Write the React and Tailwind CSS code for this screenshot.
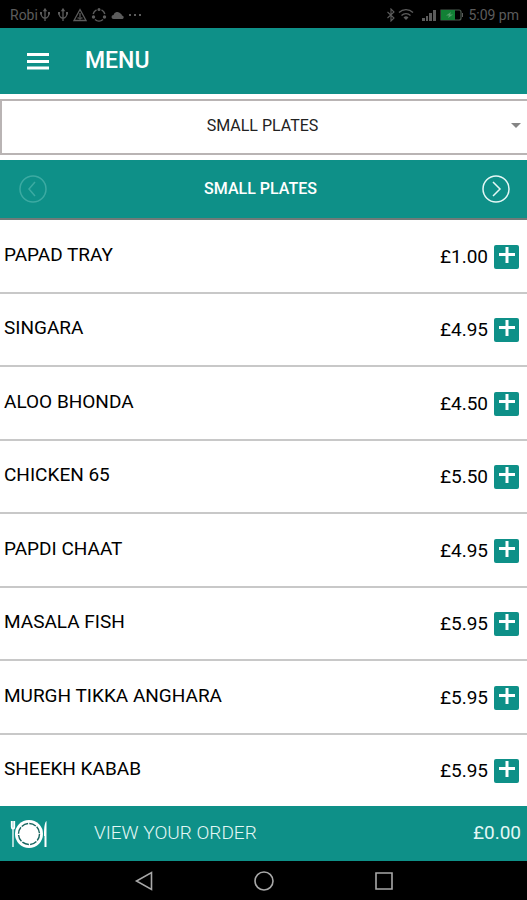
import React from "react";

const dishes = [
  { name: "PAPAD TRAY", price: "£1.00" },
  { name: "SINGARA", price: "£4.95" },
  { name: "ALOO BHONDA", price: "£4.50" },
  { name: "CHICKEN 65", price: "£5.50" },
  { name: "PAPDI CHAAT", price: "£4.95" },
  { name: "MASALA FISH", price: "£5.95" },
  { name: "MURGH TIKKA ANGHARA", price: "£5.95" },
  { name: "SHEEKH KABAB", price: "£5.95" },
];

function UsbIcon() {
  return (
    <svg className="h-3.5 w-3" viewBox="0 0 12 14" fill="none" stroke="currentColor" strokeWidth="1.3">
      <path d="M6 1v12M6 10.500C3 9.500 2 8.500 2 5M6 10.500c3-1 4-2 4-5.500" />
      <path d="M5 2.500 6 1l1 1.500z" fill="currentColor" />
      <path d="M1 4h2v2.500H1zM9 4h2v2.500H9z" fill="currentColor" stroke="none" />
    </svg>
  );
}

function StatusBar() {
  return (
    <div className="flex h-7 shrink-0 items-center justify-between bg-black pl-2.5 pr-2 pt-0.5 text-sm text-[#5c5c5c]">
      <div className="flex items-center">
        <span className="w-7">Robi</span>
        <span className="ml-px flex gap-1.5">
          <UsbIcon />
          <UsbIcon />
        </span>
        <svg className="ml-1 h-3.5 w-3.5" viewBox="0 0 14 14" fill="none" stroke="currentColor" strokeWidth="1.3">
          <path d="M7 1.500 13 12.500H1zM7 5v4M7 10v1.500" />
          <path d="M4.500 10h5" />
        </svg>
        <svg className="ml-1 h-4 w-4" viewBox="0 0 16 16" fill="none" stroke="currentColor" strokeWidth="1.4">
          <path d="M5.500 2.800A6 6 0 0 0 2.200 7M10.500 2.800A6 6 0 0 1 13.800 7M4 12.500a6 6 0 0 0 8 0" />
          <circle cx="8" cy="2.500" r="1.500" fill="currentColor" stroke="none" />
          <circle cx="2.500" cy="10" r="1.700" fill="currentColor" stroke="none" />
          <circle cx="13.500" cy="10" r="1.700" fill="currentColor" stroke="none" />
        </svg>
        <svg className="ml-1 h-3 w-3.5" viewBox="0 0 14 12" fill="currentColor">
          <path d="M2.500 10a2 2 0 0 1 0-4A4 4 0 0 1 9.500 4.500 3 3 0 0 1 11 6.500a1.800 1.800 0 0 1 .5 3.500z" />
        </svg>
        <svg className="ml-1 h-3 w-3" viewBox="0 0 12 12" fill="currentColor">
          <path d="M0 5h2v2H0zM5 5h2v2H5zM10 5h2v2h-2z" />
        </svg>
      </div>
      <div className="flex items-center">
        <svg className="h-3.5 w-2.5" viewBox="0 0 10 14" fill="none" stroke="currentColor" strokeWidth="1.100">
          <path d="m1.500 4 6.500 6-3 3V1l3 3-6.500 6" />
        </svg>
        <svg className="ml-0.5 h-3.5 w-4" viewBox="0 0 16 14" fill="none" stroke="currentColor" strokeWidth="1.300">
          <path d="M1 4.500a10 10 0 0 1 14 0M3.500 7.500a6.500 6.500 0 0 1 9 0" />
          <path d="M5.500 9.500a3.500 3.500 0 0 1 5 0L8 12z" fill="currentColor" stroke="none" />
        </svg>
        <svg className="ml-2 h-3.5 w-3.5" viewBox="0 0 14 14" fill="currentColor">
          <path d="M0 10h3v3H0zM4 8h2v5H4zM7 5h3v8H7zM11 2h3v11h-3z" />
        </svg>
        <svg className="ml-1 h-3 w-6" viewBox="0 0 24 12">
          <path d="M1 1h18a2 2 0 0 1 2 2v6a2 2 0 0 1-2 2H1z" fill="none" stroke="#4d5a50" strokeWidth="1.200" />
          <path d="M1 1h14v10H1z" fill="#128035" />
          <path d="m11 3-5 3.500h3L8 9l5-3.500h-3z" fill="#55a06c" />
          <path d="M22 4h1v4h-1z" fill="#5c5c5c" />
        </svg>
        <span className="ml-1">5:09 pm</span>
      </div>
    </div>
  );
}

function CircleArrow({ direction }) {
  return (
    <svg className="h-7 w-7" viewBox="0 0 28 28" fill="none" stroke="currentColor" strokeWidth="1.500">
      <circle cx="14" cy="14" r="13" />
      <path d={direction === "left" ? "m16 7-6 7 6 7" : "m11 7 7 7-7 7"} />
    </svg>
  );
}

function DishRow({ dish }) {
  return (
    <li className="flex min-h-16 flex-1 items-center justify-between border-b-2 border-[#c8c8c8] pl-1 pr-2 pt-0.5 text-[19px] leading-6 text-black last:border-b-0">
      <span className="pb-1">{dish.name}</span>
      <span className="flex items-center gap-1.5">
        <span>{dish.price}</span>
        <button type="button" aria-label={`Add ${dish.name}`} className="flex h-6 w-[25px] items-start justify-center rounded-xs bg-[#0e9088] text-white">
          <svg className="h-5 w-[25px]" viewBox="0 0 25 20" fill="none" stroke="currentColor" strokeWidth="3">
            <path d="M13 2v16M5 9.500h16" />
          </svg>
        </button>
      </span>
    </li>
  );
}

export default function App() {
  return (
    <div className="flex min-h-screen flex-col bg-white font-['Roboto',sans-serif]">
      <StatusBar />
      <header className="flex h-[66px] shrink-0 items-center bg-[#0e9088] pl-[27px] text-white">
        <button type="button" aria-label="Open menu" className="h-5 w-[22px]">
          <svg className="h-5 w-[22px]" viewBox="0 0 22 20" fill="none" stroke="currentColor" strokeWidth="3">
            <path d="M0 3.500h22M0 10.500h22M0 17h22" />
          </svg>
        </button>
        <h1 className="ml-9 text-[23px] font-medium leading-8">MENU</h1>
      </header>
      <main className="flex flex-1 flex-col">
        <div className="relative my-[5px]">
          <select aria-label="Category" defaultValue="SMALL PLATES" className="block h-14 w-full appearance-none border-2 border-r-0 border-[#b9b4b4] bg-white pb-0.5 pr-1 text-center text-base text-[#222] [text-align-last:center]">
            <option>SMALL PLATES</option>
          </select>
          <svg className="pointer-events-none absolute right-1.5 top-6 h-[5px] w-2.5" viewBox="0 0 10 5" fill="#858585">
            <path d="M0 0h10L5 5z" />
          </svg>
        </div>
        <nav aria-label="Categories" className="flex h-[60px] shrink-0 items-center border-b-2 border-[#6f7a78] bg-[#0e9088] pl-[19px] pr-[17px] text-white">
          <button type="button" aria-label="Previous category" disabled className="text-[#3caaa2]">
            <CircleArrow direction="left" />
          </button>
          <h2 className="flex-1 pr-2 text-center text-base font-medium">SMALL PLATES</h2>
          <button type="button" aria-label="Next category" className="text-[#e4f7f5]">
            <CircleArrow direction="right" />
          </button>
        </nav>
        <ul className="flex flex-1 flex-col">
          {dishes.map((dish) => (
            <DishRow key={dish.name} dish={dish} />
          ))}
        </ul>
      </main>
      <button type="button" className="flex h-[55px] shrink-0 items-center bg-[#0e9088] pl-2.5 pr-1.5 text-[19px] text-[#e4f7f5]">
        <svg className="h-7 w-[38px] text-white" viewBox="0 0 38 28" fill="none" stroke="currentColor">
          <path d="M1.500 1v6q0 2 1.500 2t1.500-2V1M3 1v26" strokeWidth="1.300" />
          <path d="M36.500 27h-2V16h-.5C34 6 35 2 36.500 1z" fill="currentColor" stroke="none" />
          <circle cx="19" cy="14" r="14" fill="currentColor" stroke="none" />
          <circle cx="19" cy="14" r="10.500" stroke="#17655f" strokeWidth="1.400" strokeDasharray="7 1.246" />
        </svg>
        <span className="ml-[46px] font-light">VIEW YOUR ORDER</span>
        <span className="ml-auto">£0.00</span>
      </button>
      <div className="flex h-[39px] shrink-0 items-center justify-center gap-[100px] bg-black text-[#a8a8a8]">
        <button type="button" aria-label="Back">
          <svg className="h-5 w-5" viewBox="0 0 20 20" fill="none" stroke="currentColor" strokeWidth="1.600">
            <path d="M17.500 1.500v17L2.500 10z" />
          </svg>
        </button>
        <button type="button" aria-label="Home">
          <svg className="h-5 w-5" viewBox="0 0 20 20" fill="none" stroke="currentColor" strokeWidth="1.600">
            <circle cx="10" cy="10" r="9" />
          </svg>
        </button>
        <button type="button" aria-label="Recent apps">
          <svg className="h-5 w-5" viewBox="0 0 20 20" fill="none" stroke="currentColor" strokeWidth="1.600">
            <path d="M2 2h16v16H2z" />
          </svg>
        </button>
      </div>
    </div>
  );
}
